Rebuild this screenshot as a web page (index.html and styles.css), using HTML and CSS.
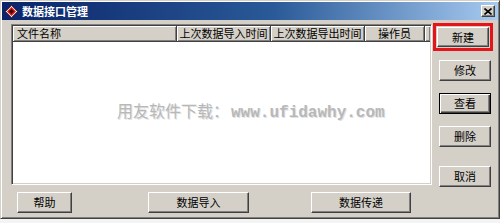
FILE: index.html
```html
<!DOCTYPE html>
<html lang="zh-CN">
<head>
<meta charset="utf-8">
<title>数据接口管理</title>
<link rel="stylesheet" href="styles.css">
</head>
<body>
<div class="window">
  <div class="titlebar">
    <svg class="app-icon" width="13" height="13" viewBox="0 0 13 13">
      <polygon points="6.5,0.5 12.5,6.5 6.5,12.5 0.5,6.5" fill="#f4f0f0" stroke="#7a1010" stroke-width="0.8"/>
      <polygon points="6.5,2 11,6.5 6.5,11 2,6.5" fill="#d81818"/>
      <polygon points="6.5,4 9,6.5 6.5,9 4,6.5" fill="#3a0606"/>
    </svg>
    <span class="title">数据接口管理</span>
    <span class="close">
      <svg width="8" height="7" viewBox="0 0 8 7"><path d="M0.5 0.5 L7.5 6.5 M7.5 0.5 L0.5 6.5" stroke="#000" stroke-width="1.6"/></svg>
    </span>
  </div>
  <div class="client">
    <div class="main">
      <div class="listview">
        <div class="header">
          <div class="hcell c1">文件名称</div>
          <div class="hcell c2">上次数据导入时间</div>
          <div class="hcell c3">上次数据导出时间</div>
          <div class="hcell c4">操作员</div>
          <div class="hcell c5"></div>
        </div>
        <div class="list-body">
          <div class="watermark"><span class="wm-cn">用友软件下载：</span><span class="wm-url">www.ufidawhy.com</span></div>
        </div>
      </div>
      <div class="bottom-buttons">
        <button class="btn b-help">帮助</button>
        <button class="btn b-import">数据导入</button>
        <button class="btn b-send">数据传递</button>
      </div>
    </div>
    <div class="side">
      <div class="highlight"><button class="btn b-new">新建</button></div>
      <button class="btn side-btn b-edit">修改</button>
      <button class="btn side-btn default b-view">查看</button>
      <button class="btn side-btn b-del">删除</button>
      <button class="btn side-btn b-cancel">取消</button>
    </div>
  </div>
</div>
</body>
</html>
```
FILE: styles.css
```css
html, body {
  margin: 0;
  padding: 0;
  background: #f4f4f4;
  width: 500px;
  height: 223px;
  overflow: hidden;
}

.window {
  width: 500px;
  height: 219px;
  box-sizing: border-box;
  background: #d4d0c8;
  border: 1px solid;
  border-color: #d4d0c8 #404040 #404040 #d4d0c8;
  padding: 1px;
  box-shadow: inset 1px 1px #ffffff, inset -1px -1px #808080;
  font-family: "Noto Sans CJK SC", "Liberation Sans", sans-serif;
  font-size: 11px;
  color: #000;
}

.titlebar {
  height: 18px;
  display: flex;
  align-items: center;
  padding-left: 3px;
  padding-right: 3px;
  background: linear-gradient(to right, #0a246a 0%, #2a5a98 55%, #a6caf0 100%);
}

.app-icon {
  flex: none;
}

.title {
  margin-left: 4px;
  color: #fff;
  font-weight: bold;
  font-size: 11px;
  line-height: 18px;
  flex: 1;
}

.close {
  width: 14px;
  height: 12px;
  box-sizing: border-box;
  display: flex;
  align-items: center;
  justify-content: center;
  background: #d4d0c8;
  border: 1px solid;
  border-color: #ffffff #404040 #404040 #ffffff;
  box-shadow: inset -1px -1px #808080;
}

.client {
  display: flex;
  align-items: flex-start;
  padding: 4px 0 0 9px;
}

.main {
  width: 421px;
  display: flex;
  flex-direction: column;
}

.listview {
  height: 161px;
  box-sizing: border-box;
  background: #fff;
  border: 1px solid;
  border-color: #808080 #ffffff #ffffff #808080;
  padding: 1px;
  box-shadow: inset 1px 1px #404040, inset -1px -1px #d4d0c8;
  display: flex;
  flex-direction: column;
}

.header {
  display: flex;
  height: 16px;
  flex: none;
  background: #d4d0c8;
}

.hcell {
  box-sizing: border-box;
  height: 16px;
  line-height: 14px;
  border-right: 1px solid #404040;
  border-bottom: 1px solid #404040;
  box-shadow: inset 1px 1px #ffffff, inset -1px -1px #808080;
  white-space: nowrap;
  overflow: hidden;
  text-align: center;
}

.c1 { width: 164px; text-align: left; padding-left: 4px; }
.c2 { width: 94px; }
.c3 { width: 94px; }
.c4 { width: 60px; }
.c5 { flex: 1; border-right: none; }

.list-body {
  flex: 1;
  position: relative;
}

.watermark {
  position: absolute;
  left: 104px;
  top: 58px;
  white-space: nowrap;
  color: #b8b8b8;
  text-shadow: 1px 1px 0 #e2e2e2;
  line-height: 20px;
}

.wm-cn {
  font-family: "Noto Sans CJK SC", sans-serif;
  font-size: 16px;
  font-weight: normal;
}

.wm-url {
  font-family: "Liberation Mono", monospace;
  font-size: 16px;
  font-weight: bold;
  margin-left: 2px;
}

.btn {
  font-family: "Noto Sans CJK SC", "Liberation Sans", sans-serif;
  font-size: 11px;
  color: #000;
  background: #d4d0c8;
  border: 1px solid;
  border-color: #ffffff #404040 #404040 #ffffff;
  box-shadow: inset -1px -1px #808080;
  padding: 0;
  margin: 0;
  height: 21px;
  box-sizing: border-box;
  display: flex;
  align-items: center;
  justify-content: center;
  line-height: 19px;
}

.bottom-buttons {
  display: flex;
  margin-top: 7px;
}

.b-help { width: 55px; margin-left: 6px; }
.b-import { width: 101px; margin-left: 76px; }
.b-send { width: 100px; margin-left: 62px; }

.side {
  width: 60px;
  margin-left: 1px;
  margin-top: -1px;
  display: flex;
  flex-direction: column;
  align-items: flex-start;
}

.highlight {
  width: 60px;
  height: 28px;
  box-sizing: border-box;
  border: 3px solid #e5141b;
  padding: 1px;
}

.b-new {
  width: 52px;
  height: 20px;
}

.side-btn {
  width: 52px;
  margin-left: 6px;
}

.b-edit { margin-top: 9px; }
.b-view { margin-top: 12px; }
.b-del { margin-top: 12px; }
.b-cancel { margin-top: 19px; }

.default {
  border: 1px solid #000;
  box-shadow: inset 1px 1px #ffffff, inset -1px -1px #404040, inset -2px -2px #808080;
}
```
